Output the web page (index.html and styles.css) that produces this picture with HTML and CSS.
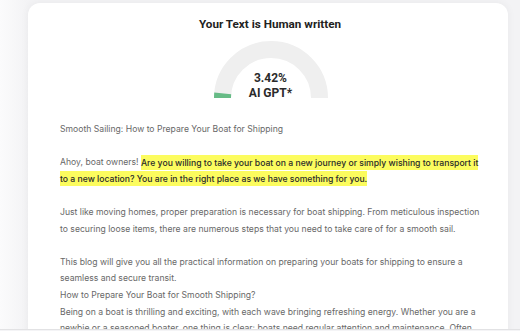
FILE: index.html
```html
<!DOCTYPE html>
<html>
<head>
<meta charset="utf-8">
<link rel="stylesheet" href="styles.css">
</head>
<body>
<div class="page">
  <div class="card">
    <h1 class="title">Your Text is Human written</h1>
    <div class="gauge">
      <svg class="gauge-svg" width="116" height="60" viewBox="0 0 116 60">
        <path d="M 9.5 58 A 48.5 48.5 0 0 1 106.5 58" fill="none" stroke="#efefef" stroke-width="17"/>
        <path d="M 9.5 58 A 48.5 48.5 0 0 1 9.72 53.4" fill="none" stroke="#67bb86" stroke-width="17"/>
      </svg>
      <div class="gauge-label">
        <span class="pct">3.42%</span>
        <span class="pct">AI GPT*</span>
      </div>
    </div>
    <div class="text">
      <p>Smooth Sailing: How to Prepare Your Boat for Shipping</p>
      <p>Ahoy, boat owners! <mark class="hl">Are you willing to take your boat on a new journey or simply wishing to transport it to a new location? You are in the right place as we have something for you.</mark></p>
      <p>Just like moving homes, proper preparation is necessary for boat shipping. From meticulous inspection to securing loose items, there are numerous steps that you need to take care of for a smooth sail.</p>
      <p class="tight">This blog will give you all the practical information on preparing your boats for shipping to ensure a seamless and secure transit.</p>
      <p class="tight">How to Prepare Your Boat for Smooth Shipping?</p>
      <p class="tight">Being on a boat is thrilling and exciting, with each wave bringing refreshing energy. Whether you are a newbie or a seasoned boater, one thing is clear: boats need regular attention and maintenance. Often</p>
    </div>
  </div>
</div>
<div class="bottom-bar"></div>
</body>
</html>
```
FILE: styles.css
```css
html, body {
  margin: 0;
  padding: 0;
}
body {
  width: 520px;
  height: 331px;
  overflow: hidden;
  background: linear-gradient(90deg, #fbfbfc 0px, #f3f3f5 28px, #f3f3f5 100%);
  font-family: Inter, "Noto Sans", sans-serif;
  position: relative;
}
.page {
  padding: 3px 0 0 28px;
}
.card {
  width: 480px;
  box-sizing: border-box;
  background: #ffffff;
  border-radius: 12px 12px 0 0;
  box-shadow: 0 0 8px rgba(0, 0, 0, 0.05);
  padding: 14px 28px 20px 32px;
  display: flex;
  flex-direction: column;
  align-items: stretch;
}
.title {
  margin: 0;
  font-family: Roboto, "Noto Sans", sans-serif;
  font-size: 11.7px;
  line-height: 15px;
  font-weight: 700;
  color: #222;
  text-align: center;
}
.gauge {
  position: relative;
  align-self: center;
  width: 116px;
  height: 60px;
  margin-top: 8px;
  margin-left: 1px;
}
.gauge-svg {
  display: block;
}
.gauge-label {
  position: absolute;
  left: 0;
  right: 0;
  top: 31px;
  display: flex;
  flex-direction: column;
  align-items: center;
}
.pct {
  font-family: Roboto, "Noto Sans", sans-serif;
  font-size: 12px;
  line-height: 15px;
  font-weight: 700;
  color: #2a2a2a;
}
.text {
  margin-top: 21px;
  font-size: 8.65px;
  line-height: 16.6px;
  color: #686868;
}
.text p {
  margin: 0 0 16.6px 0;
}
.text p.tight {
  margin: 0;
}
.hl {
  background: #fcfc5e;
  color: #2a2a2a;
  font-weight: 500;
  padding: 2.5px 0;
}
.bottom-bar {
  position: absolute;
  left: 0;
  right: 0;
  bottom: 0;
  height: 1px;
  background: #f4f4f6;
  border-top: 1px solid #e2e2e4;
}
```
